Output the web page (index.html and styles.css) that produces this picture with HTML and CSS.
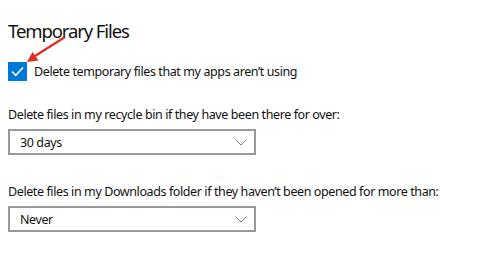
FILE: index.html
```html
<!DOCTYPE html>
<html lang="en">
<head>
  <meta charset="UTF-8">
  <meta name="viewport" content="width=device-width, initial-scale=1.0">
  <title>Temporary Files</title>
  <link rel="stylesheet" href="styles.css">
</head>
<body>
  <div class="settings">
    <h1>Temporary Files</h1>

    <div class="check-row">
      <span class="checkbox">
        <svg width="19" height="19" viewBox="0 0 19 19">
          <path d="M4 9.5 L7.8 13.3 L15 5.5" fill="none" stroke="#fff" stroke-width="1.5"/>
        </svg>
      </span>
      <span class="check-label">Delete temporary files that my apps aren’t using</span>
      <!-- red pointer arrow drawn over the checkbox -->
      <svg class="pointer" width="44" height="30" viewBox="0 0 44 30">
        <path d="M39 1 L9 20" stroke="#e02a24" stroke-width="2.2" fill="none"/>
        <path d="M1 26 L6.5 16 L12.5 24.5 Z" fill="#e02a24"/>
      </svg>
    </div>

    <div class="field">
      <p class="field-label">Delete files in my recycle bin if they have been there for over:</p>
      <div class="dropdown">
        <span>30 days</span>
        <svg width="12" height="7" viewBox="0 0 12 7">
          <path d="M0.5 0.5 L6 6 L11.5 0.5" fill="none" stroke="#808080" stroke-width="1"/>
        </svg>
      </div>
    </div>

    <div class="field">
      <p class="field-label">Delete files in my Downloads folder if they haven’t been opened for more than:</p>
      <div class="dropdown">
        <span>Never</span>
        <svg width="12" height="7" viewBox="0 0 12 7">
          <path d="M0.5 0.5 L6 6 L11.5 0.5" fill="none" stroke="#808080" stroke-width="1"/>
        </svg>
      </div>
    </div>
  </div>
</body>
</html>
```

FILE: styles.css
```css
body {
  font-family: "Noto Sans", "Open Sans", sans-serif;
  background-color: #fff;
  color: #111;
  margin: 0;
  padding: 0;
  overflow: hidden;
}

.settings {
  padding: 17px 8px 0 8px;
}

h1 {
  font-size: 18.5px;
  font-weight: 400;
  line-height: 28px;
  margin: 0 0 16px 0;
  letter-spacing: -1.1px;
}

.check-row {
  position: relative;
  display: flex;
  align-items: center;
  gap: 7px;
  height: 20px;
}

.checkbox {
  width: 19px;
  height: 19px;
  background-color: #0078d7;
  display: flex;
  align-items: center;
  justify-content: center;
}

.check-label, .field-label, .dropdown {
  font-size: 12.5px;
  letter-spacing: -0.4px;
}

.pointer {
  position: absolute;
  left: 18px;
  top: -25px;
}

.field {
  margin-top: 26px;
}

.field-label {
  margin: 0 0 6px 0;
  line-height: 16px;
}

.dropdown {
  box-sizing: border-box;
  width: 248px;
  height: 26px;
  border: 2px solid #999;
  display: flex;
  align-items: center;
  justify-content: space-between;
  padding: 0 0 0 10px;
}

.dropdown svg {
  margin-right: 7px;
}

.field + .field {
  margin-top: 29px;
}
```
